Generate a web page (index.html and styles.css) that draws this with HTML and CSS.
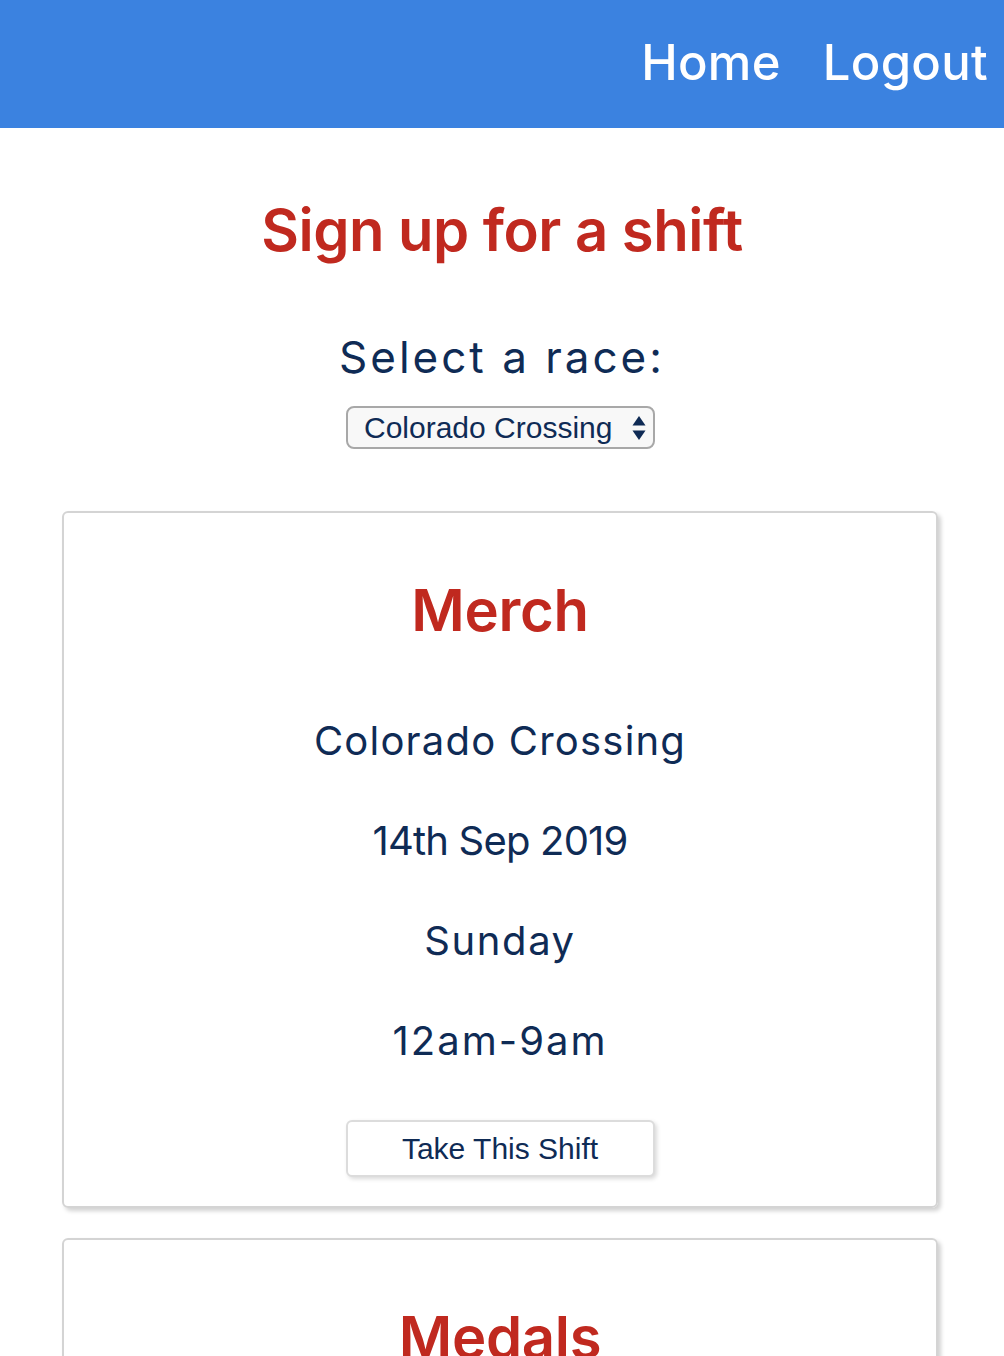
FILE: index.html
```html
<!DOCTYPE html>
<html lang="en">
<head>
<meta charset="utf-8">
<title>Sign up for a shift</title>
<link rel="stylesheet" href="styles.css">
</head>
<body>
<header class="topbar">
  <nav class="nav">
    <a class="nav-link" href="#">Home</a>
    <a class="nav-link" href="#">Logout</a>
  </nav>
</header>
<main class="page">
  <h1 class="title">Sign up for a shift</h1>
  <h2 class="select-label">Select a race:</h2>
  <div class="select-box">
    <span class="select-text">Colorado Crossing</span>
    <svg class="select-arrows" width="14" height="26" viewBox="0 0 14 26"><path d="M7 1 L13.5 10.5 L0.5 10.5 Z" fill="#0f2b55"/><path d="M0.5 15.5 L13.5 15.5 L7 25 Z" fill="#0f2b55"/></svg>
  </div>
  <section class="card">
    <h3 class="card-title">Merch</h3>
    <p class="card-line line-race">Colorado Crossing</p>
    <p class="card-line line-date">14th Sep 2019</p>
    <p class="card-line line-day">Sunday</p>
    <p class="card-line line-time">12am-9am</p>
    <button class="take-btn">Take This Shift</button>
  </section>
  <section class="card">
    <h3 class="card-title">Medals</h3>
  </section>
</main>
</body>
</html>
```
FILE: styles.css
```css
* { box-sizing: border-box; }
html, body { margin: 0; padding: 0; background: #fff; }
body { font-family: "Inter", "Open Sans", sans-serif; color: #0f2b55; overflow: hidden; height: 1356px; }

.topbar {
  height: 128px;
  background: #3b82e0;
  display: flex;
  justify-content: flex-end;
  align-items: flex-start;
  padding-right: 16px;
}
.nav { display: flex; gap: 42px; padding-top: 30px; }
.nav-link {
  color: #fff;
  text-decoration: none;
  font-size: 49px;
  font-weight: 500;
  line-height: 66px;
  letter-spacing: 0.3px;
}

.page { display: flex; flex-direction: column; align-items: center; padding: 0 62px; }

.title {
  margin: 62px 0 0;
  color: #c0291f;
  font-size: 58px;
  font-weight: 600;
  line-height: 80px;
  letter-spacing: -0.5px;
}
.select-label {
  margin: 57px 0 0;
  font-size: 44px;
  font-weight: 400;
  line-height: 60px;
  letter-spacing: 3px;
}
.select-box {
  margin-top: 19px;
  width: 309px;
  height: 43px;
  border: 2px solid #a8a8a8;
  border-radius: 8px;
  background: #f8f8f8;
  display: flex;
  align-items: center;
  justify-content: space-between;
  padding: 0 7px 0 16px;
  margin-right: 3px;
}
.select-text {
  font-family: "Liberation Sans", Arial, sans-serif;
  font-size: 30px;
  color: #0f2b55;
}
.select-arrows { display: block; }

.card {
  margin-top: 62px;
  margin-right: 4px;
  width: 876px;
  height: 697px;
  border: 2px solid #d4d4d4;
  border-radius: 6px;
  box-shadow: 3px 3px 4px rgba(0,0,0,0.18);
  display: flex;
  flex-direction: column;
  align-items: center;
  padding-top: 62px;
  flex-shrink: 0;
}
.card + .card { margin-top: 30px; }
.card-title {
  margin: 0;
  color: #c0291f;
  font-size: 58px;
  font-weight: 600;
  line-height: 70px;
  letter-spacing: -0.3px;
}
.card-line {
  margin: 0;
  font-size: 40px;
  line-height: 100px;
}
.line-race { letter-spacing: 1.2px; }
.line-date { letter-spacing: -0.8px; }
.line-day { letter-spacing: 1.6px; }
.line-time { letter-spacing: 2px; }
.card-title + .card-line { margin-top: 46px; }
.take-btn {
  margin-top: 29px;
  width: 309px;
  height: 57px;
  background: #fff;
  border: 2px solid #dcdcdc;
  border-radius: 6px;
  box-shadow: 2px 2px 4px rgba(0,0,0,0.15);
  font-family: "Liberation Sans", Arial, sans-serif;
  font-size: 30px;
  color: #0f2b55;
  padding: 0;
}
```
